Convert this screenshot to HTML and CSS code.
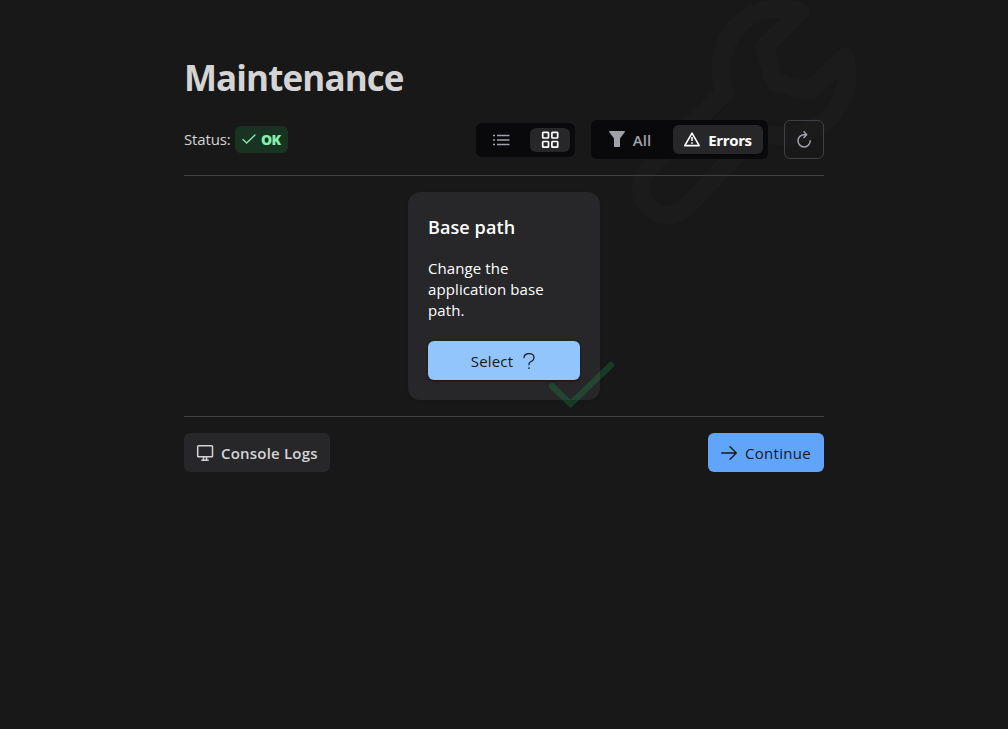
FILE: index.html
```html
<!DOCTYPE html>
<html lang="en">
<head>
<meta charset="utf-8">
<title>Maintenance</title>
<link rel="stylesheet" href="styles.css">
</head>
<body>
<svg class="wrench" viewBox="0 0 750 720" fill="none" stroke="currentColor" stroke-width="57" stroke-linejoin="round"><path d="M540 34C455 14 380 35 335 100C300 150 295 215 313 279L100 488C50 540 55 595 88 622C120 652 165 652 200 620L412 396C500 422 590 400 640 340C680 290 688 230 675 170L570 275L464 245L434 142Z"/></svg>
<main class="page">
  <h1 class="title">Maintenance</h1>
  <div class="toolbar">
    <div class="status"><span class="status-label">Status:</span>
      <span class="tag"><svg class="tag-icon" viewBox="0 0 14 14"><path d="M1 7.500 4.700 11 13 3" fill="none" stroke="currentColor" stroke-width="1.3" stroke-linecap="round" stroke-linejoin="round"/></svg><span class="tag-text">OK</span></span>
    </div>
    <div class="tools">
      <div class="group group-view">
        <button class="toggle toggle-list"><svg class="icon" viewBox="0 0 16 16"><path d="M0 3.500h2M4 3.500h12.500M0 8h2M4 8h12.500M0 12.500h2M4 12.500h12.500" stroke="currentColor" stroke-width="1.6" fill="none"/></svg></button>
        <button class="toggle toggle-grid active"><svg class="icon" viewBox="0 0 16 16" fill="none" stroke="currentColor" stroke-width="1.7"><rect x=".7" y=".3" width="5.800" height="5.700" rx=".7"/><rect x="9.900" y=".3" width="5.800" height="5.700" rx=".7"/><rect x=".7" y="9.500" width="5.800" height="5.700" rx=".7"/><rect x="9.900" y="9.500" width="5.800" height="5.700" rx=".7"/></svg></button>
      </div>
      <div class="group group-filter">
        <button class="toggle toggle-all"><svg class="icon" viewBox="0 0 16 16"><path d="M.5 0h15q.8.4.3 1.100L11 7.500v7.800q0 .7-.7.7H5.700Q5 16 5 15.300V7.500L.2 1.100Q-.2.3.5 0z" fill="currentColor"/></svg><span class="all-text">All</span></button>
        <button class="toggle toggle-errors active"><svg class="icon" viewBox="0 0 16 16" fill="none" stroke="currentColor" stroke-width="1.6" stroke-linejoin="round"><path d="M8 2.200.8 14.600h14.400zM8 6v4M8 11.300v1.500"/></svg><span class="errors-text">Errors</span></button>
      </div>
      <button class="refresh"><svg class="icon" viewBox="0 0 16 16" fill="none" stroke="currentColor" stroke-width="1.500" stroke-linecap="round" stroke-linejoin="round"><path d="M10 3.700H8a6.100 6.100 0 1 0 6.200 6.100M8 .8 10.700 3.700 8 6.500"/></svg></button>
    </div>
  </div>
  <section class="content">
    <article class="card">
      <h2 class="card-title">Base path</h2>
      <p class="card-text"><span>Change the</span><br><span>application base</span><br><span>path.</span></p>
      <button class="select"><span class="select-text">Select</span><svg class="icon" viewBox="0 0 16 16" fill="none" stroke="currentColor" stroke-width="1.2" stroke-linecap="round"><path d="M3 4.700C3 2 5.100.7 8 .7s5 1.400 5 3.900c0 2.700-1.800 3.600-3.300 4.200C8.500 9.300 8 9.800 8 11v.8"/><path d="M8 15v.2" stroke-width="1.6"/></svg></button>
      <svg class="card-check" viewBox="0 0 66 48"><path d="M3 25 21.500 43 62 4" fill="none" stroke="currentColor" stroke-width="6" stroke-linecap="round"/></svg>
    </article>
  </section>
  <footer class="footer">
    <button class="console"><svg class="icon" viewBox="0 0 16 16" fill="none" stroke="currentColor" stroke-width="1.500" stroke-linecap="round"><rect x=".7" y=".7" width="14.800" height="11" rx=".8"/><path d="M6.500 11.700v3.200M9.500 11.700v3.200M4.800 15.200h6.400"/></svg><span class="console-text">Console Logs</span></button>
    <button class="continue"><svg class="icon" viewBox="0 0 16 16" fill="none" stroke="currentColor" stroke-width="1.400" stroke-linecap="round" stroke-linejoin="round"><path d="M.7 8h14.600M9 1.700 15.300 8 9 14.300"/></svg><span class="continue-text">Continue</span></button>
  </footer>
</main>
</body>
</html>
```
FILE: styles.css
```css
* { box-sizing: border-box; }
body {
  margin: 0;
  height: 729px;
  overflow: hidden;
  background: #181818;
  color: #d4d4d4;
  font-family: "Open Sans", "Noto Sans", sans-serif;
  font-size: 15px;
}
button { border: 0; margin: 0; padding: 0; font: inherit; color: inherit; background: none; }
svg { display: block; flex: none; overflow: visible; }
span { white-space: nowrap; }
.icon { width: 16px; height: 16px; }
.wrench { position: absolute; left: 620px; top: 0; width: 250px; height: 240px; color: #1b1b1b; }
.page { position: relative; width: 640px; margin: 0 auto; padding-top: 54px; }
.title { margin: 0; height: 48px; line-height: 48px; font-size: 35px; font-weight: 700; letter-spacing: -.9px; }
.toolbar {
  display: flex;
  align-items: center;
  justify-content: space-between;
  height: 56px;
  margin-top: 18px;
  padding-bottom: 17px;
  border-bottom: 1px solid #404040;
}
.status { display: flex; align-items: center; gap: 5px; }
.status-label { width: 46px; letter-spacing: -.15px; }
.tag {
  display: flex;
  align-items: center;
  gap: 5px;
  width: 53px;
  height: 27px;
  padding-left: 7px;
  border-radius: 6px;
  background: #193323;
  color: #86efac;
  font-size: 14px;
  font-weight: 800;
  letter-spacing: -.6px;
}
.tag-icon { width: 14px; height: 14px; }
.tools { display: flex; align-items: center; gap: 16px; height: 39px; }
.group { display: flex; align-items: center; border-radius: 6px; background: #09090b; color: #a1a1aa; }
.group-view { width: 99px; height: 34px; margin-top: 1px; padding: 0 5px; gap: 9px; }
.group-filter { width: 177px; height: 39px; padding: 0 5px; gap: 9px; }
.toggle { display: flex; align-items: center; justify-content: center; gap: 8px; border-radius: 6px; font-weight: 600; }
.toggle.active { background: #27272a; color: #fff; }
.toggle-list, .toggle-grid { width: 40px; height: 24px; }
.toggle-all { width: 68px; height: 29px; }
.toggle-errors { width: 90px; height: 29px; }
.all-text, .errors-text { padding-top: 2px; }
.errors-text { font-weight: 700; letter-spacing: -.35px; }
.refresh {
  display: flex;
  align-items: center;
  justify-content: center;
  width: 40px;
  height: 39px;
  border: 1px solid #3f3f46;
  border-radius: 6px;
  color: #a1a1aa;
}
.content { padding: 16px 0; border-bottom: 1px solid #404040; }
.card {
  position: relative;
  width: 192px;
  height: 208px;
  margin: 0 auto;
  padding: 20px;
  border-radius: 12px;
  background: #27272a;
  color: #fff;
  box-shadow: 0 1px 3px rgba(0, 0, 0, .1);
}
.card-title { margin: 0; height: 30px; line-height: 30px; font-size: 18px; font-weight: 650; letter-spacing: .1px; }
.card-text { margin: 16px 0 20px; line-height: 21px; letter-spacing: .1px; }
.select {
  display: flex;
  align-items: center;
  justify-content: center;
  gap: 8px;
  width: 152px;
  height: 39px;
  border-radius: 6px;
  background: #93c5fd;
  color: #18181b;
  font-weight: 500;
  letter-spacing: .2px;
  box-shadow: 0 1px 3px rgba(0, 0, 0, .5);
}
.card-check { position: absolute; left: 141px; top: 168.500px; width: 66px; height: 48px; color: #16a34a; opacity: .25; }
.footer { display: flex; justify-content: space-between; padding-top: 16px; }
.console, .continue { display: flex; align-items: center; gap: 8px; height: 39px; padding-left: 13px; border-radius: 6px; }
.console { width: 146px; background: #27272a; font-weight: 600; letter-spacing: .2px; }
.continue { width: 116px; background: #60a5fa; color: #18181b; font-weight: 500; letter-spacing: .3px; }
```
